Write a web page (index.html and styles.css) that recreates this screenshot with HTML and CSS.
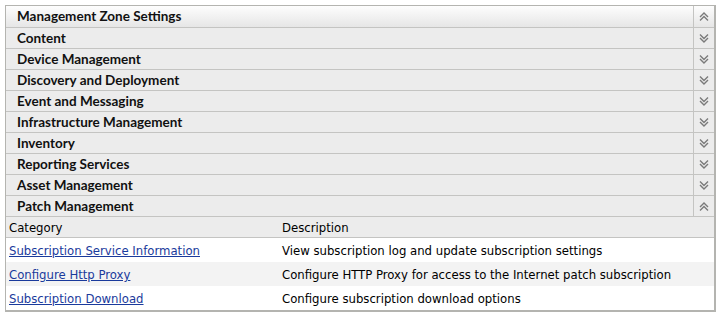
FILE: index.html
```html
<!DOCTYPE html>
<html>
<head>
<meta charset="utf-8">
<link rel="stylesheet" href="styles.css">
</head>
<body>
<div class="panel">
  <div class="row head">
    <div class="title">Management Zone Settings</div>
    <div class="tog"><svg width="10" height="9" viewBox="0 0 10 9"><path d="M1 5 L5 1 L9 5 M1 8.5 L5 4.5 L9 8.5" fill="none" stroke="#7a7a7a" stroke-width="1.4"/></svg></div>
  </div>
  <div class="row"><div class="title">Content</div><div class="tog"><svg width="10" height="9" viewBox="0 0 10 9"><path d="M1 0.5 L5 4.5 L9 0.5 M1 4 L5 8 L9 4" fill="none" stroke="#7a7a7a" stroke-width="1.4"/></svg></div></div>
  <div class="row"><div class="title">Device Management</div><div class="tog"><svg width="10" height="9" viewBox="0 0 10 9"><path d="M1 0.5 L5 4.5 L9 0.5 M1 4 L5 8 L9 4" fill="none" stroke="#7a7a7a" stroke-width="1.4"/></svg></div></div>
  <div class="row"><div class="title">Discovery and Deployment</div><div class="tog"><svg width="10" height="9" viewBox="0 0 10 9"><path d="M1 0.5 L5 4.5 L9 0.5 M1 4 L5 8 L9 4" fill="none" stroke="#7a7a7a" stroke-width="1.4"/></svg></div></div>
  <div class="row"><div class="title">Event and Messaging</div><div class="tog"><svg width="10" height="9" viewBox="0 0 10 9"><path d="M1 0.5 L5 4.5 L9 0.5 M1 4 L5 8 L9 4" fill="none" stroke="#7a7a7a" stroke-width="1.4"/></svg></div></div>
  <div class="row"><div class="title">Infrastructure Management</div><div class="tog"><svg width="10" height="9" viewBox="0 0 10 9"><path d="M1 0.5 L5 4.5 L9 0.5 M1 4 L5 8 L9 4" fill="none" stroke="#7a7a7a" stroke-width="1.4"/></svg></div></div>
  <div class="row"><div class="title">Inventory</div><div class="tog"><svg width="10" height="9" viewBox="0 0 10 9"><path d="M1 0.5 L5 4.5 L9 0.5 M1 4 L5 8 L9 4" fill="none" stroke="#7a7a7a" stroke-width="1.4"/></svg></div></div>
  <div class="row"><div class="title">Reporting Services</div><div class="tog"><svg width="10" height="9" viewBox="0 0 10 9"><path d="M1 0.5 L5 4.5 L9 0.5 M1 4 L5 8 L9 4" fill="none" stroke="#7a7a7a" stroke-width="1.4"/></svg></div></div>
  <div class="row"><div class="title">Asset Management</div><div class="tog"><svg width="10" height="9" viewBox="0 0 10 9"><path d="M1 0.5 L5 4.5 L9 0.5 M1 4 L5 8 L9 4" fill="none" stroke="#7a7a7a" stroke-width="1.4"/></svg></div></div>
  <div class="row"><div class="title">Patch Management</div><div class="tog"><svg width="10" height="9" viewBox="0 0 10 9"><path d="M1 5 L5 1 L9 5 M1 8.5 L5 4.5 L9 8.5" fill="none" stroke="#7a7a7a" stroke-width="1.4"/></svg></div></div>
  <div class="table">
    <div class="trow thead"><div class="c1">Category</div><div class="c2">Description</div></div>
    <div class="trow"><div class="c1"><a href="#">Subscription Service Information</a></div><div class="c2">View subscription log and update subscription settings</div></div>
    <div class="trow alt"><div class="c1"><a href="#">Configure Http Proxy</a></div><div class="c2">Configure HTTP Proxy for access to the Internet patch subscription</div></div>
    <div class="trow"><div class="c1"><a href="#">Subscription Download</a></div><div class="c2">Configure subscription download options</div></div>
  </div>
</div>
</body>
</html>
```

FILE: styles.css
```css
html, body { margin: 0; padding: 0; background: #fff; }
body { padding: 5px 3px 0 5px; font-family: "DejaVu Sans Condensed", "DejaVu Sans", sans-serif; font-size: 13px; color: #000; }
.panel { width: 708px; border: 1px solid #b4b4b0; border-right: 2px solid #b4b4b0; border-bottom: 2px solid #b4b4b0; }
.row { display: flex; height: 20px; background: #ececec; border-bottom: 1px solid #c4c4c2; }
.row.head { height: 21px; background: linear-gradient(#fdfdfd, #e6e6e6); }
.title { flex: 1; padding-left: 11px; font-family: Lato, "DejaVu Sans Condensed", sans-serif; font-weight: bold; font-size: 13.5px; line-height: 20px; color: #111; }
.head .title { line-height: 21px; }
.tog { width: 20px; border-left: 1px solid #c4c4c2; display: flex; align-items: center; justify-content: center; }
.trow { display: flex; height: 24px; align-items: center; padding-top: 1px; box-sizing: border-box; }
.trow.thead { height: 21px; padding-top: 0; background: #ececec; border-bottom: 1px solid #c4c4c2; }
.trow.alt { background: #f3f3f3; }
.c1 { width: 273px; padding-left: 3px; }
.c2 { flex: 1; }
a { color: #1a3a9c; text-decoration: underline; }
```
